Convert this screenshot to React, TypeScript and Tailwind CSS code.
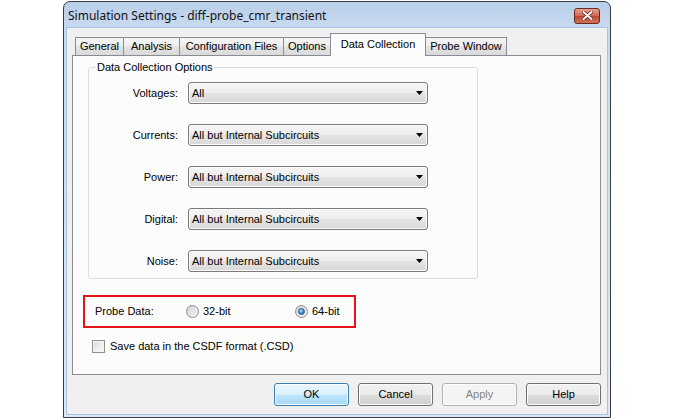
import React from 'react';

const ROWS = [
    { label: 'Voltages:', value: 'All' },
    { label: 'Currents:', value: 'All but Internal Subcircuits' },
    { label: 'Power:', value: 'All but Internal Subcircuits' },
    { label: 'Digital:', value: 'All but Internal Subcircuits' },
    { label: 'Noise:', value: 'All but Internal Subcircuits' },
];

const TABS = [
    { name: 'General', w: 'w-[49px]' },
    { name: 'Analysis', w: 'w-[57px]' },
    { name: 'Configuration Files', w: 'w-[105px]' },
    { name: 'Options', w: 'w-[48px]' },
    { name: 'Data Collection', w: 'w-[96px]', active: true },
    { name: 'Probe Window', w: 'w-[82px]' },
];

const Combo: React.FC<{ value: string }> = ({ value }) => (
    <div className="flex h-[22px] w-[240px] items-center justify-between rounded-[3px] border border-[#7a7a7a] bg-[linear-gradient(#f5f5f5,#eeeeee_50%,#e3e3e3_50%,#d9d9d9)] pl-[3px] pr-[4px] shadow-[inset_0_0_0_1px_#fbfbfb]">
        <span className="leading-none">{value}</span>
        <svg width="7" height="4" viewBox="0 0 7 4">
            <path d="M0 0h7L3.5 4z" fill="#000" />
        </svg>
    </div>
);

const Radio: React.FC<{ checked?: boolean; label: string }> = ({ checked, label }) => (
    <div className="flex items-center gap-[4px]">
        <div className="flex h-[13px] w-[13px] items-center justify-center rounded-full border border-[#8e8f8f] bg-[linear-gradient(135deg,#d2d2d2,#f6f6f6)]">
            {checked && (
                <div className="h-[7px] w-[7px] rounded-full border border-[#2c5e88] bg-[radial-gradient(circle_at_40%_35%,#b6e0fb,#2f87c9_60%,#1c5a8f)]" />
            )}
        </div>
        <span>{label}</span>
    </div>
);

const Button: React.FC<{ label: string; primary?: boolean; disabled?: boolean }> = ({ label, primary, disabled }) => {
    let cls = 'border-[#707070] bg-[linear-gradient(#f2f2f2,#ebebeb_50%,#dddddd_50%,#cfcfcf)] text-black';
    if (primary) cls = 'border-[#3c7fb1] bg-[linear-gradient(#eaf6fd,#d9f0fc_50%,#bee6fd_50%,#a7d9f5)] text-black';
    if (disabled) cls = 'border-[#adb2b5] bg-[#f4f4f4] text-[#838383]';
    return (
        <div className={`flex h-[23px] w-[75px] items-center justify-center rounded-[3px] border shadow-[inset_0_0_0_1px_#fcfcfc] ${cls}`}>
            {label}
        </div>
    );
};

export default function App() {
    return (
        <div className="h-[418px] w-[675px] overflow-hidden bg-white pl-[63px] pt-px font-['Liberation_Sans',Arial,sans-serif] text-[11px] text-black">
            <div className="flex h-[417px] w-[548px] flex-col rounded-t-[7px] border border-[#3c3c3c] bg-[linear-gradient(#b9cee9,#c8daef_26px,#dce8f5)]">
                <div className="flex h-[25px] items-center justify-between pl-[4px] pr-[10px]">
                    <span className="pt-[2px] font-['Noto_Sans',sans-serif] text-[12px] text-[#111]">
                        Simulation Settings - diff-probe_cmr_transient
                    </span>
                    <div className="mt-[2px] flex h-[16px] w-[26px] items-center justify-center rounded-[3px] border border-[#6b2a22] bg-[linear-gradient(#e6a190,#d1664f_50%,#c0432c_50%,#d0745c)]">
                        <svg width="11" height="9" viewBox="0 0 11 9">
                            <path d="M1.5 1l8 7M9.5 1l-8 7" stroke="#5a1f18" strokeWidth="3.4" strokeLinecap="round" />
                            <path d="M1.5 1l8 7M9.5 1l-8 7" stroke="#fff" strokeWidth="2" strokeLinecap="round" />
                        </svg>
                    </div>
                </div>
                <div className="mx-[2px] mb-[2px] flex flex-1 flex-col border border-[#a7c3e3] bg-[#f0f0f0] pl-[5px] pr-[6px] pt-[5px]">
                    <div className="relative z-10 flex h-[22px] items-end pl-[3px]">
                        {TABS.map(t => (
                            <div
                                key={t.name}
                                className={`-mr-px flex items-center justify-center border border-[#898c95] ${t.w} ${
                                    t.active
                                        ? '-mb-px h-[23px] border-b-0 bg-[#fcfcfc] pb-[2px]'
                                        : 'h-[18px] border-b-0 bg-[linear-gradient(#f5f5f5,#eeeeee_50%,#e4e4e4_50%,#dadada)]'
                                }`}
                            >
                                {t.name}
                            </div>
                        ))}
                    </div>
                    <div className="flex h-[320px] flex-col border border-[#898c95] bg-[#fcfcfc]">
                        <fieldset className="ml-[15px] mt-[5px] w-[390px] rounded-[3px] border border-[#d5dfe5] pb-[6px]">
                            <legend className="ml-[7px] px-[1px] leading-[13px]">Data Collection Options</legend>
                            <div className="flex flex-col gap-[20px] pt-[8px]">
                                {ROWS.map(r => (
                                    <div key={r.label} className="flex items-center gap-[10px]">
                                        <span className="w-[89px] text-right">{r.label}</span>
                                        <Combo value={r.value} />
                                    </div>
                                ))}
                            </div>
                        </fieldset>
                        <div className="ml-[10px] mt-[16px] flex h-[33px] w-[273px] items-center border-2 border-[#e3151a] pl-[10px]">
                            <span className="w-[91px]">Probe Data:</span>
                            <div className="w-[109px]">
                                <Radio label="32-bit" />
                            </div>
                            <Radio checked label="64-bit" />
                        </div>
                        <div className="ml-[19px] mt-[10px] flex items-center gap-[5px]">
                            <div className="h-[13px] w-[13px] border border-[#8e8f8f] bg-[linear-gradient(135deg,#dcdcdc,#fbfbfb)] shadow-[inset_0_0_0_1px_#f4f4f4]" />
                            <span>Save data in the CSDF format (.CSD)</span>
                        </div>
                    </div>
                    <div className="mt-[8px] flex justify-end gap-[9px]">
                        <Button label="OK" primary />
                        <Button label="Cancel" />
                        <Button label="Apply" disabled />
                        <Button label="Help" />
                    </div>
                </div>
            </div>
        </div>
    );
}
